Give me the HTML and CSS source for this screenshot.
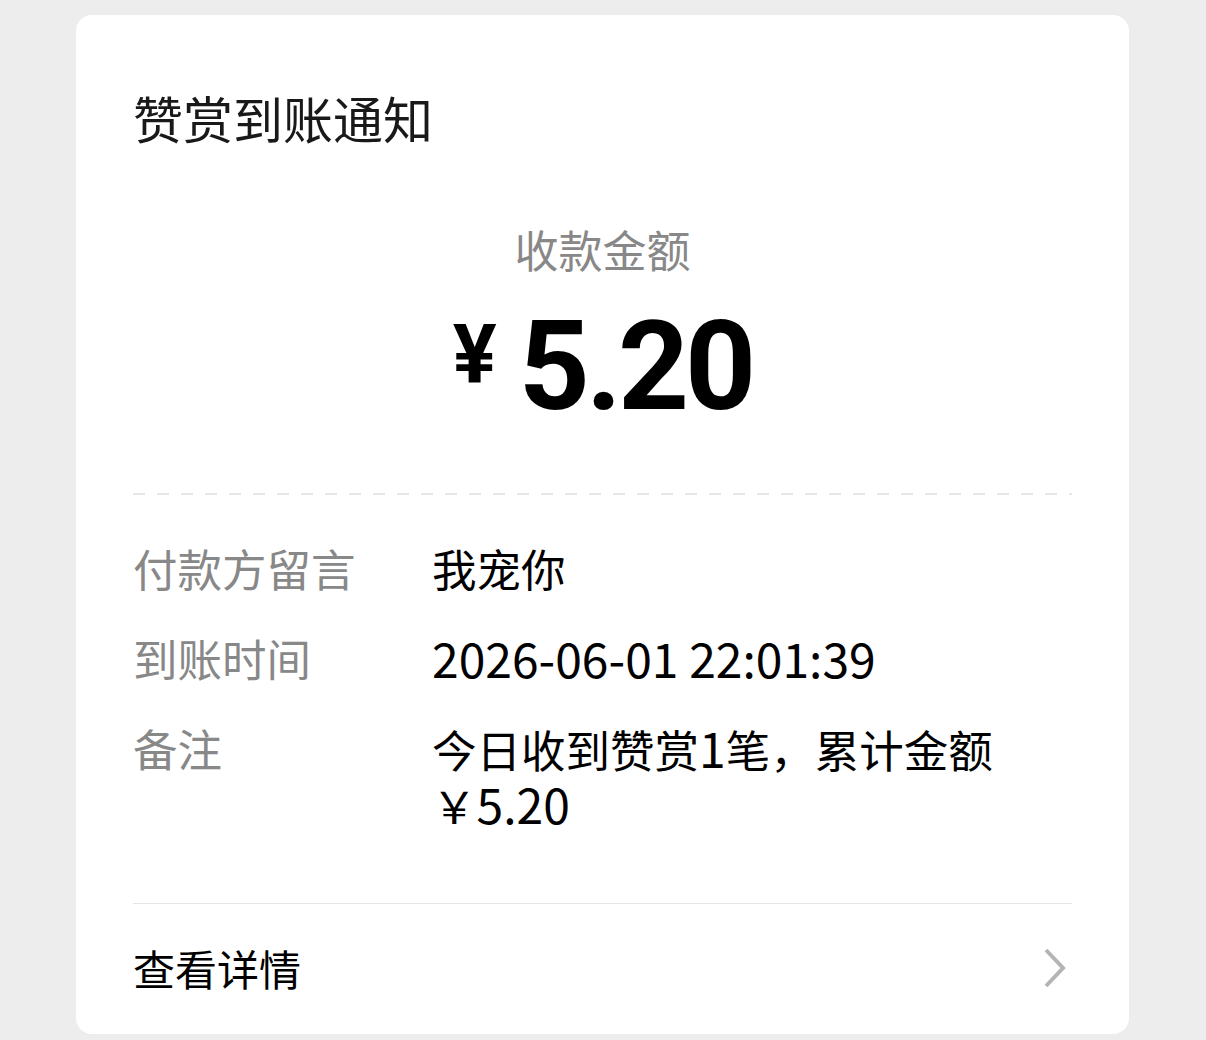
FILE: index.html
```html
<html>
  <head>
    <meta charset="utf-8">
    <title>赞赏到账通知</title>
    <link rel="stylesheet" href="styles.css">
  </head>
  <body>
  <div class="card">
    <div class="title">赞赏到账通知</div>
    <div class="sub">收款金额</div>
    <div class="amount"><span class="yen">¥</span><span class="num">5.20</span></div>
    <div class="dash"></div>
    <div class="rows">
      <div class="row"><div class="k">付款方留言</div><div class="v">我宠你</div></div>
      <div class="row"><div class="k">到账时间</div><div class="v"><span class="n">2026-06-01 22:01:39</span></div></div>
      <div class="row"><div class="k">备注</div><div class="v">今日收到赞赏<span class="n">1</span>笔，累计金额<br>￥<span class="n">5.20</span></div></div>
    </div>
    <div class="foot">
      <span>查看详情</span>
      <svg class="arrow" width="26" height="42" viewBox="0 0 26 42"><path d="M4 3 L21 21 L4 39" fill="none" stroke="#b4b4b4" stroke-width="4"/></svg>
    </div>
  </div>
 </body>
</html>
```

FILE: styles.css
```css
body { margin: 0; background: #ededed; font-family: "Noto Sans CJK SC", sans-serif; }
.card { width: 1053px; margin: 15px 0 0 76px; background: #fff; border-radius: 16px; padding: 72px 57px 36px; box-sizing: border-box; }
.title { font-size: 50px; line-height: 60px; color: #191919; }
.sub { margin-top: 72px; text-align: center; font-size: 44px; line-height: 60px; color: #888; }
.amount { display: flex; justify-content: center; align-items: flex-start; margin-top: 26px; height: 124px; font-family: Roboto, sans-serif; }
.yen { font-size: 82px; line-height: 1; font-weight: bold; margin-top: 8px; margin-right: 22px; color: #000; }
.num { font-size: 124px; line-height: 1; font-weight: bold; color: #000; letter-spacing: -4px; }
.dash { margin-top: 64px; height: 2px; background: repeating-linear-gradient(to right, #e6e6e6 0 12px, transparent 12px 24px); }
.rows { padding-top: 45px; }
.row { display: flex; font-size: 44.5px; line-height: 55px; margin-bottom: 35px; }
.row:last-child { margin-bottom: 0; }
.k { width: 299px; flex: none; color: #888; }
.v { flex: 1; color: #000; }
.n { font-size: 48px; }
.foot { border-top: 1px solid #e5e5e5; margin-top: 71px; padding-top: 34px; display: flex; justify-content: space-between; align-items: center; font-size: 42px; line-height: 60px; color: #000; }
.arrow { margin-right: 4px; }
```
